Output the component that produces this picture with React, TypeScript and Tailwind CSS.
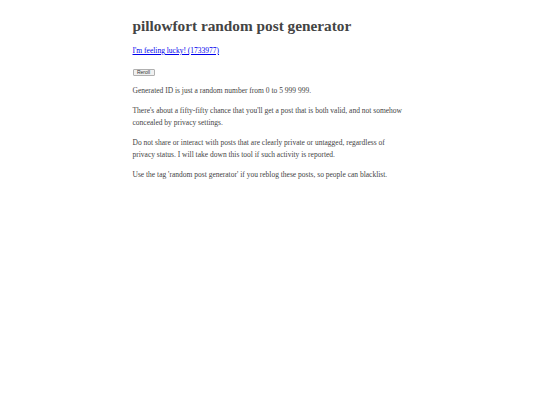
export default function App() {
  return (
    <div className="min-h-screen bg-white font-['Liberation_Serif',serif] text-[#444]">
      <div className="mx-auto w-[275px] pt-[16px]">
        <h1 className="text-[15.3px] font-bold leading-[20px]">
          pillowfort random post generator
        </h1>
        <p className="mt-[9px] text-[7.5px] leading-[12px]">
          <a href="#" className="text-[#0000ee] underline">
            I'm feeling lucky! (1733977)
          </a>
        </p>
        <div className="mt-[12px] flex leading-none">
          <button className="h-[7px] w-[22px] rounded-[1px] border border-[#b0b0b0] bg-[#f0f0f0] p-0 font-['Liberation_Sans',sans-serif] text-[5px] leading-[5px] text-[#333]">
            Reroll
          </button>
        </div>
        <div className="mt-[9px] space-y-[7px] text-[7.5px] leading-[12.5px]">
          <p>Generated ID is just a random number from 0 to 5 999 999.</p>
          <p>
            There's about a fifty-fifty chance that you'll get a post that is
            both valid, and not somehow concealed by privacy settings.
          </p>
          <p>
            Do not share or interact with posts that are clearly private or
            untagged, regardless of privacy status. I will take down this tool
            if such activity is reported.
          </p>
          <p>
            Use the tag 'random post generator' if you reblog these posts, so
            people can blacklist.
          </p>
        </div>
      </div>
    </div>
  );
}
